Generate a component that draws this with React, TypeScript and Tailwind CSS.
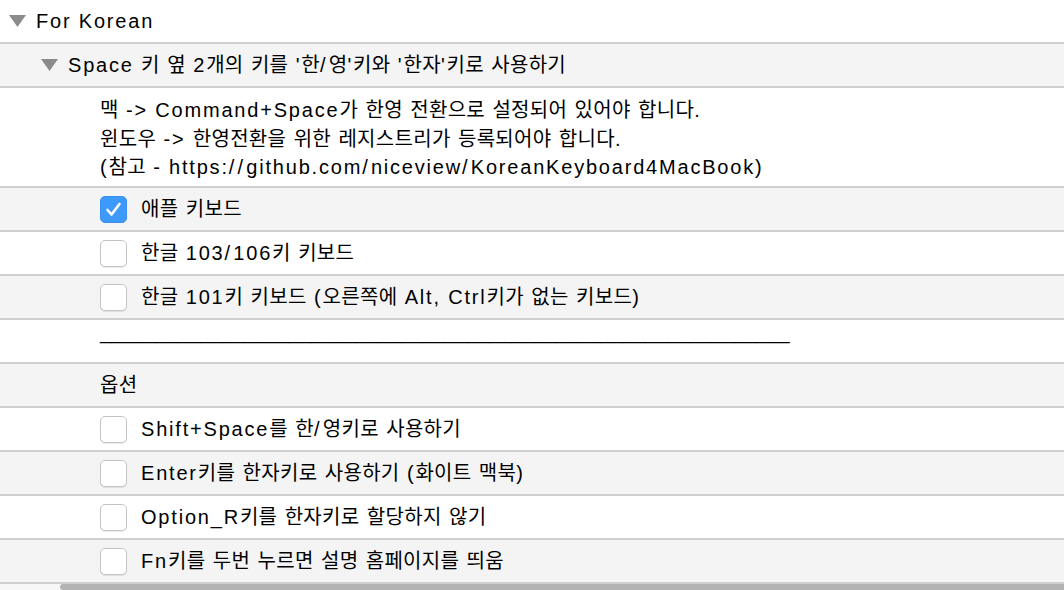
import React from "react";

const font = {
  fontFamily: '"Liberation Sans", "Noto Sans CJK KR", sans-serif',
};

const HANGUL = /([\uAC00-\uD7A3\u3131-\u318E]+|\/)/;

// Hangul runs are set tighter than Latin runs, as in the original rendering;
// slashes are wider in the original face, so they get extra room
function T({ text }: { text: string }) {
  const parts = text.split(HANGUL);
  return (
    <span>
      {parts.map((p, i) => {
        if (p === "") return null;
        if (p === "/")
          return (
            <span key={i} className="tracking-[3.2px]">
              {p}
            </span>
          );
        if (/[\uAC00-\uD7A3\u3131-\u318E]/.test(p))
          return (
            <span key={i} className="tracking-[0.3px]">
              {p}
            </span>
          );
        return (
          <span key={i} className="tracking-[1.8px]">
            {p}
          </span>
        );
      })}
    </span>
  );
}

function Triangle() {
  return (
    <svg width="17" height="12" viewBox="0 0 17 12" className="shrink-0">
      <path d="M0 0 H17 L8.5 12 Z" fill="#8b8b8b" />
    </svg>
  );
}

function Checkbox({ checked }: { checked?: boolean }) {
  if (checked) {
    return (
      <div className="w-[27px] h-[27px] shrink-0 rounded-[5px] bg-[#3d9afc] border border-[#3a8ff0] flex items-center justify-center">
        <svg width="17" height="15" viewBox="0 0 17 15">
          <path
            d="M2.5 8 L6.5 12.5 L14.5 2"
            fill="none"
            stroke="white"
            strokeWidth="2.6"
            strokeLinecap="round"
            strokeLinejoin="round"
          />
        </svg>
      </div>
    );
  }
  return (
    <div className="w-[27px] h-[27px] shrink-0 rounded-[5px] bg-white border border-[#c4c4c4] shadow-[0_1px_0_rgba(0,0,0,0.08)]" />
  );
}

function Row({
  shade,
  className = "",
  children,
}: {
  shade?: boolean;
  className?: string;
  children: React.ReactNode;
}) {
  return (
    <div
      className={`flex items-center border-b-2 border-[#cfcfcf] ${
        shade ? "bg-[#f4f4f4]" : "bg-white"
      } ${className}`}
    >
      {children}
    </div>
  );
}

function CheckRow({
  label,
  checked,
  shade,
}: {
  label: string;
  checked?: boolean;
  shade?: boolean;
}) {
  return (
    <Row shade={shade} className="h-[44px] pl-[100px] gap-[14px]">
      <Checkbox checked={checked} />
      <T text={label} />
    </Row>
  );
}

export default function App() {
  return (
    <div
      className="w-[1064px] h-[590px] overflow-hidden bg-white text-[20px] text-black"
      style={font}
    >
      <Row className="h-[44px] pl-[9px] gap-[10px]">
        <Triangle />
        <T text="For Korean" />
      </Row>
      <Row shade className="h-[44px] pl-[41px] gap-[10px]">
        <Triangle />
        <T text="Space 키 옆 2개의 키를 '한/영'키와 '한자'키로 사용하기" />
      </Row>
      <div className="h-[100px] bg-white border-b-2 border-[#cfcfcf] pl-[100px] pt-[8px] leading-[28.5px]">
        <div>
          <T text="맥 -> Command+Space가 한영 전환으로 설정되어 있어야 합니다." />
        </div>
        <div>
          <T text="윈도우 -> 한영전환을 위한 레지스트리가 등록되어야 합니다." />
        </div>
        <div>
          <T text="(참고 - https://github.com/niceview/KoreanKeyboard4MacBook)" />
        </div>
      </div>
      <CheckRow shade checked label="애플 키보드" />
      <CheckRow label="한글 103/106키 키보드" />
      <CheckRow shade label="한글 101키 키보드 (오른쪽에 Alt, Ctrl키가 없는 키보드)" />
      <Row className="h-[44px] pl-[100px]">
        <span className="leading-none pb-[18px]">{"_".repeat(62)}</span>
      </Row>
      <Row shade className="h-[44px] pl-[100px]">
        <T text="옵션" />
      </Row>
      <CheckRow label="Shift+Space를 한/영키로 사용하기" />
      <CheckRow shade label="Enter키를 한자키로 사용하기 (화이트 맥북)" />
      <CheckRow label="Option_R키를 한자키로 할당하지 않기" />
      <CheckRow shade label="Fn키를 두번 누르면 설명 홈페이지를 띄움" />
      <div className="h-[6px] flex bg-[#f7f7f7]">
        <div className="ml-[60px] flex-1 rounded-l-full bg-[#b3b3b3]" />
      </div>
    </div>
  );
}
